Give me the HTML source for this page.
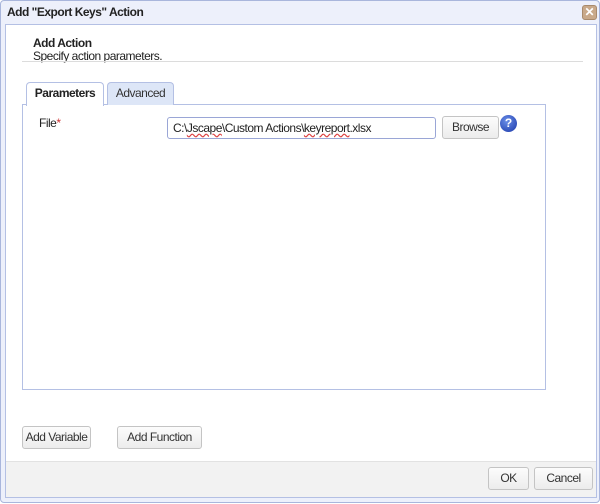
<!DOCTYPE html>
<html><head><style>
*{box-sizing:border-box;margin:0;padding:0}
body{width:600px;height:504px;background:#fff;font-family:"Liberation Sans",Arial,sans-serif;font-size:12px;letter-spacing:-0.5px;color:#222;position:relative;overflow:hidden}
.abs{position:absolute;white-space:nowrap}
.outer{left:0;top:0;width:600px;height:503px;border:1px solid #a9b6dc;border-radius:4px;background:#edf0fb}
.title{left:7px;top:5px;font-size:12px;font-weight:bold;color:#222}
.inner{left:5px;top:24px;width:592px;height:474px;border:1px solid #b4c0e4;background:#fff}
.foot{left:6px;top:461px;width:590px;height:36px;background:#f2f2f2;border-top:1px solid #e2e2e2}
.btn{position:absolute;white-space:nowrap;border:1px solid #c4c4c4;border-radius:3px;background:linear-gradient(#fcfcfc,#ececec);font-size:12px;color:#333;text-align:center}
.tab{position:absolute;top:82px;height:23px;border:1px solid #b4c0e4;border-bottom:none;border-radius:4px 4px 0 0;font-size:12px;text-align:center;line-height:21px}
</style></head><body>
<div class="abs outer"></div>
<div class="abs title">Add "Export Keys" Action</div>
<div class="abs" style="left:582px;top:5px;width:15px;height:15px;background:#c9a98a;border:1px solid #a88a6c;border-radius:3px;color:#fff;font-size:12px;font-weight:bold;line-height:13px;text-align:center;letter-spacing:0">✕</div>
<div class="abs inner"></div>
<div class="abs" style="left:33px;top:36px;font-weight:bold;font-size:12px">Add Action</div>
<div class="abs" style="left:33px;top:49px;font-size:12px">Specify action parameters.</div>
<div class="abs" style="left:22px;top:61px;width:561px;height:1px;background:#dcdcdc"></div>
<div class="abs" style="left:22px;top:104px;width:524px;height:286px;border:1px solid #b4c0e4"></div>
<div class="tab" style="left:26px;width:78px;background:#fff;font-weight:bold;height:24px">Parameters</div>
<div class="tab" style="left:107px;width:67px;background:#dde6f7;color:#333">Advanced</div>
<div class="abs" style="left:39px;top:116px">File<span style="color:#c33">*</span></div>
<div class="abs" style="left:167px;top:117px;width:269px;height:22px;border:1px solid #9aa6d6;border-radius:3px;padding:3px 5px;font-size:12px">C:\<span style="text-decoration:underline wavy #d44">Jscape</span>\Custom Actions\<span style="text-decoration:underline wavy #d44">keyreport</span>.xlsx</div>
<div class="btn" style="left:442px;top:116px;width:57px;height:23px;line-height:21px">Browse</div>
<div class="abs" style="left:500px;top:115px;width:17px;height:17px;border-radius:50%;background:radial-gradient(circle at 40% 35%,#6a8ee8,#1a37a8);color:#fff;font-weight:bold;font-size:12px;line-height:17px;text-align:center;letter-spacing:0">?</div>
<div class="btn" style="left:22px;top:426px;width:69px;height:23px;line-height:21px">Add Variable</div>
<div class="btn" style="left:117px;top:426px;width:85px;height:23px;line-height:21px">Add Function</div>
<div class="abs foot"></div>
<div class="btn" style="left:488px;top:467px;width:41px;height:23px;line-height:21px">OK</div>
<div class="btn" style="left:534px;top:467px;width:59px;height:23px;line-height:21px">Cancel</div>
</body></html>
